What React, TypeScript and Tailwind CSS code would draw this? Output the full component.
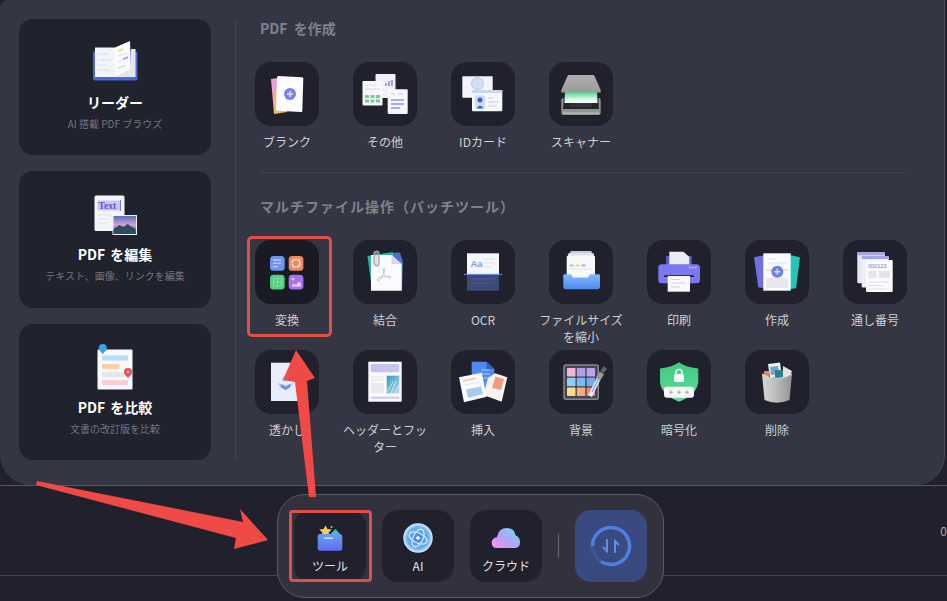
import type { ReactNode } from "react";

const Svg = ({ size = 64, h, children }: { size?: number; h?: number; children: ReactNode }) => (
  <svg width={size} height={h ?? size} viewBox={`0 0 ${size} ${h ?? size}`} fill="none">
    {children}
  </svg>
);

// left column cards
const ReaderIcon = () => (
  <Svg size={60} h={48}>
    <rect x="8" y="14" width="44.500" height="29.500" rx="2.500" fill="#4f68d8" />
    <path d="M10 10.500 H30 V40 H10 Z" fill="#f1f4f8" />
    <path d="M30 39.500 L46 33 V12 H50.500 V40 H30 Z" fill="#e4e6ec" />
    <path d="M30 10.500 L45 4 L46 33 L30 40 Z" fill="#fbfbfd" />
    <path d="M12.500 17h11M12.500 23h14M12.500 28h9M12.500 33h13" stroke="#d3e0e6" strokeWidth="1" />
    <path d="M33 14l5-2" stroke="#ecdf8a" strokeWidth="2" />
    <path d="M33 19l9-3M33 25l10-4" stroke="#dcdeee" strokeWidth="1.200" />
    <path d="M38 22l5-2" stroke="#9ea3e0" strokeWidth="1.500" />
    <path d="M33 31l7-2.500" stroke="#b0dcd2" strokeWidth="1.200" />
  </Svg>
);

const EditIcon = () => (
  <Svg size={60} h={48}>
    <defs>
      <linearGradient id="sky" x1="0" y1="0" x2="0" y2="1">
        <stop offset="0" stopColor="#5c6fb8" />
        <stop offset="0.500" stopColor="#d8a0d8" />
        <stop offset="1" stopColor="#2e5a70" />
      </linearGradient>
    </defs>
    <rect x="9.500" y="6.500" width="30" height="35.500" rx="1.500" fill="#f3f5fa" />
    <rect x="12.500" y="11.500" width="22.500" height="10" fill="#cbc6f6" />
    <rect x="35" y="11" width="0.800" height="11" fill="#5b54d6" />
    <text x="13.500" y="20" fontFamily="'Liberation Serif', serif" fontSize="9.500" fontWeight="700" fill="#5b54d6">
      Text
    </text>
    <path d="M13 26h14M13 30h12M13 34h10" stroke="#dfe2ea" strokeWidth="1.200" />
    <rect x="27.500" y="26" width="24.500" height="20" fill="#eef2f7" />
    <rect x="28.500" y="27" width="22.500" height="18" fill="url(#sky)" />
    <path d="M28.500 40l6-4 4 2 4-3 8 5v5h-22z" fill="#2c4c5e" />
  </Svg>
);

const CompareIcon = () => (
  <Svg size={60} h={48}>
    <rect x="12.500" y="7.500" width="35" height="40" rx="1" fill="#f8f9fb" />
    <rect x="17" y="13.500" width="26" height="5" fill="#b5dcf8" />
    <rect x="17" y="22" width="17.500" height="5" rx="1" fill="#f8cfa8" />
    <rect x="17" y="30" width="22" height="5" fill="#e6e7ec" />
    <rect x="17" y="38" width="26" height="5" fill="#fad0d4" />
    <path d="M17.800 12 C15 9 13.800 8 13.800 6 a4 4 0 0 1 8 0 C21.800 8 20.500 9 17.800 12z" fill="#3aa0ea" />
    <path d="M43 36 C40 33 39 32 39 30 a4 4 0 0 1 8 0 C47 32 46 33 43 36z" fill="#e5505a" />
    <circle cx="43" cy="30" r="1.200" fill="#f6c3c7" />
  </Svg>
);

// tile icons
const PlusDisc = ({ cx, cy, r, fill }: { cx: number; cy: number; r: number; fill: string }) => (
  <>
    <circle cx={cx} cy={cy} r={r} fill={fill} />
    <path d={`M${cx - r / 2} ${cy}h${r}M${cx} ${cy - r / 2}v${r}`} stroke="#e6e8ff" strokeWidth="1.400" />
  </>
);

const BlankIcon = () => (
  <Svg>
    <defs>
      <linearGradient id="blank" x1="0" y1="0" x2="0" y2="1">
        <stop offset="0" stopColor="#e59af0" />
        <stop offset="1" stopColor="#f7bf56" />
      </linearGradient>
    </defs>
    <path d="M16 17 L30 15 L32 50 L19 52 Z" fill="url(#blank)" />
    <path d="M23.500 14 L47 15.300 Q48.400 15.400 48.300 17 L47.300 49 Q47.300 50.200 46 50 L22.500 48.800 Q21 48.700 21 47 L22 15.500 Q22 14 23.500 14 Z" fill="#fdfdff" />
    <PlusDisc cx={35} cy={32} r={6} fill="#7b7ff0" />
  </Svg>
);

const OtherIcon = () => (
  <Svg>
    <rect x="22.500" y="12" width="20" height="24" rx="1" fill="#f0f1f6" />
    <path d="M33 24v-3M36 24v-5M39 24v-6" stroke="#a79ae8" strokeWidth="2" />
    <rect x="9.500" y="19" width="20" height="24.500" rx="1" fill="#f7f8fa" />
    <path d="M12 23h12M12 27h15" stroke="#d8dae2" />
    <path d="M12 33h4v3h-4zM17.500 33h4v3h-4zM23 33h4v3h-4zM12 37.500h4v3h-4zM17.500 37.500h4v3h-4zM23 37.500h4v3h-4z" fill="#6fd08f" />
    <rect x="34.700" y="27.300" width="20" height="24.700" rx="1" fill="#f6f7fb" />
    <path d="M38 32h4M45 32h5" stroke="#c9cbd6" />
    <path d="M38 38h13M38 42h13M38 46h9" stroke="#a5aee6" strokeWidth="1.800" />
  </Svg>
);

const IdIcon = () => (
  <Svg>
    <rect x="11.300" y="14.300" width="30.400" height="21.400" rx="1" fill="#f2f4fa" />
    <circle cx="26.500" cy="21.500" r="6" fill="#cfe0f4" stroke="#b6c6e4" />
    <rect x="21" y="28" width="30.300" height="21.300" rx="1" fill="#f5f7fc" />
    <rect x="21" y="28" width="30.300" height="3" fill="#c4d6f2" />
    <rect x="24" y="33.500" width="10" height="13" fill="#cfdcf6" />
    <circle cx="29" cy="38" r="2.500" fill="#3f62c8" />
    <path d="M25.500 46.500 q3.500-6 7 0z" fill="#3f62c8" />
    <path d="M37 36h5M37 40h11M37 44h9" stroke="#c8ccd8" />
  </Svg>
);

const ScannerIcon = () => (
  <Svg>
    <defs>
      <linearGradient id="lid" x1="0" y1="0" x2="0" y2="1">
        <stop offset="0" stopColor="#aeaeae" />
        <stop offset="1" stopColor="#9a9a9a" />
      </linearGradient>
      <linearGradient id="glow" x1="0" y1="0" x2="0" y2="1">
        <stop offset="0" stopColor="#45d48c" />
        <stop offset="0.700" stopColor="#e4fbef" />
        <stop offset="1" stopColor="#f4fdf8" />
      </linearGradient>
    </defs>
    <rect x="12.300" y="36" width="39.400" height="17" rx="2" fill="#929393" />
    <path d="M15 30 H49 L50 47 H14 Z" fill="#23272b" />
    <path d="M16 30 H48 L48.500 41 H15.500 Z" fill="url(#glow)" />
    <rect x="21" y="41" width="22" height="4" fill="#30343a" />
    <path d="M19.500 13 H44 Q45 13 45.500 14 L51.700 28 V30.500 H12.300 V28 L18.500 14 Q19 13 19.500 13 Z" fill="url(#lid)" />
    <rect x="14" y="50.500" width="36" height="1.300" fill="#bcbdbd" />
  </Svg>
);

const ConvertIcon = () => (
  <Svg>
    <rect x="15" y="16" width="14.700" height="14.700" rx="3.500" fill="#7193f0" />
    <path d="M18 20h8M18 23.300h8M18 26.600h5" stroke="#bccdfa" strokeWidth="1.300" />
    <rect x="33.700" y="16" width="14.700" height="14.700" rx="3.500" fill="#ee8a62" />
    <circle cx="41" cy="23.300" r="4" stroke="#f9d4c4" strokeWidth="1.800" strokeDasharray="5.500 0.800" />
    <rect x="15" y="34.700" width="14.700" height="14.700" rx="3.500" fill="#54cd7e" />
    <path d="M18.500 38.500h8v7.500h-8zM22.500 38.500v7.500M18.500 42.200h8" stroke="#86dfa6" strokeWidth="1" />
    <rect x="33.700" y="34.700" width="14.700" height="14.700" rx="3.500" fill="#a870f0" />
    <circle cx="38" cy="39" r="1.300" fill="#e4d2fb" />
    <path d="M36 46.500l3-3 2 1.500 3-3.500 2 2v3z" fill="#e4d2fb" />
  </Svg>
);

const MergeIcon = () => (
  <Svg>
    <path d="M38 13 L47 12.500 L50 22 L49 50 H30 Z" fill="#4f6fd0" />
    <path d="M14.500 16 L40 12 L45 48 L19 50 Z" fill="#27b8a6" />
    <path d="M18 15 H38.500 L48.700 24 V50.700 H18 Z" fill="#fbfbfd" />
    <path d="M38.500 15 L48.700 24 H38.500 Z" fill="#d8dae2" />
    <path d="M31 28 q1.500 3-1 7 l-3 5 q-2 2-3 0 q0-2 4-3 l9-1 q2 1 0 2 q-3 0-6-4 q-1.500-3 0-6z" stroke="#c6c8cf" strokeWidth="1" />
    <path d="M22 12 q3-2 4 1 v11 q-1 3-4 1 q-1-1-1-2 v-10 q0-1 1-1z" stroke="#a2a4ac" strokeWidth="1.300" fill="#c9cad0" fillOpacity="0.500" />
  </Svg>
);

const OcrIcon = () => (
  <Svg>
    <rect x="16" y="13.300" width="32" height="21" fill="#f5f7fb" />
    <text x="19.500" y="27" fontFamily="'Liberation Sans', sans-serif" fontSize="9.500" fontWeight="700" fill="#7ea0ea">
      Aa
    </text>
    <path d="M33 19h11M33 23h11M33 27h8" stroke="#dcdfe6" />
    <rect x="13" y="33.800" width="38" height="1" fill="#6f9af0" />
    <rect x="16" y="35" width="32" height="15.700" fill="#3b4a78" />
    <path d="M20 39h24M20 43h24" stroke="#4d5d90" />
  </Svg>
);

const CompressIcon = () => (
  <Svg>
    <defs>
      <linearGradient id="tray" x1="0" y1="0" x2="0" y2="1">
        <stop offset="0" stopColor="#86baf8" />
        <stop offset="1" stopColor="#4a8af0" />
      </linearGradient>
    </defs>
    <rect x="21" y="11" width="22" height="12" rx="1.500" fill="#c9ccd4" />
    <rect x="19" y="13" width="26" height="12" rx="1.500" fill="#dfe1e7" />
    <rect x="17.700" y="15.500" width="28.300" height="23" rx="1.500" fill="#f7f8fa" />
    <rect x="20.500" y="24.500" width="4" height="1.800" fill="#7fd6a0" />
    <rect x="26.500" y="24.500" width="4" height="1.800" fill="#efcf70" />
    <rect x="32.500" y="24.500" width="4" height="1.800" fill="#8ab0ee" />
    <path d="M20.500 29h23" stroke="#dfe1e7" />
    <path d="M14.300 35.500 Q14.300 34.300 15.500 34.300 H22 L24 37.500 H39 L41 34.300 H49.800 Q51 34.300 51 35.500 V46.500 Q51 49.300 48.200 49.300 H17 Q14.300 49.300 14.300 46.500 Z" fill="url(#tray)" />
  </Svg>
);

const PrintIcon = () => (
  <Svg>
    <rect x="19" y="16" width="25.700" height="12" fill="#5a56c8" />
    <path d="M22.300 11.700 H36.500 L42.300 17 V27 H22.300 Z" fill="#eceef2" />
    <rect x="11.300" y="24.300" width="41.700" height="19" rx="3.500" fill="#7b78f0" />
    <path d="M45 27.500h1.500M48 27.500h1.500M42 27.500h1.500" stroke="#dfe0fb" strokeWidth="1.300" />
    <rect x="17" y="35.300" width="30" height="1.800" rx="0.900" fill="#1c1c40" />
    <rect x="20.700" y="36" width="22.300" height="15.700" fill="#f9f9fb" />
    <path d="M24 39.500h9M24 43h14M24 47h9" stroke="#cfd0dc" />
  </Svg>
);

const CreateIcon = () => (
  <Svg>
    <path d="M9 17.300 L20 15 V48.300 L13.300 47.300 Z" fill="#6f70e4" />
    <path d="M45 15 L55 17.300 L51 48.300 L45 49 Z" fill="#1fc8b8" />
    <rect x="18.300" y="13.300" width="27.400" height="37.400" fill="#fbfcfe" />
    <path d="M22 19h10M22 23h20" stroke="#dfe1e8" />
    <path d="M21 30h6M38 30h5" stroke="#efdc90" strokeWidth="1.300" />
    <rect x="21" y="38" width="22" height="10" fill="#e6e8ee" />
    <PlusDisc cx={32.300} cy={31.700} r={6} fill="#6f7df0" />
  </Svg>
);

const NumberIcon = () => (
  <Svg>
    <rect x="14.300" y="12.300" width="27.700" height="31" rx="1" fill="#e7e8f4" />
    <rect x="14.300" y="12.300" width="27.700" height="3" fill="#a7a3ea" />
    <rect x="18.700" y="16" width="27" height="31.500" rx="1" fill="#eeeff8" />
    <rect x="18.700" y="16" width="27" height="3" fill="#a7a3ea" />
    <rect x="23" y="20" width="26.700" height="32" rx="1" fill="#fafbfc" />
    <text x="25" y="27.500" fontFamily="'Liberation Sans', sans-serif" fontSize="5.500" fill="#7a76e0">
      000123
    </text>
    <rect x="25.500" y="31" width="8" height="7" fill="#e3e4e8" />
    <rect x="36" y="31" width="11" height="7" fill="#e3e4e8" />
    <path d="M26 42h20M26 45.500h14M26 49h18" stroke="#dfe0e6" />
  </Svg>
);

const WatermarkIcon = () => (
  <Svg>
    <rect x="16" y="12.700" width="34" height="38.300" fill="#e9edfb" />
    <path d="M23 33 q8 4 15 0 q-1.500 5-7.500 7 q-6-2-7.500-7z" fill="#a5c0f5" />
    <path d="M26 34l4.500 3 4.500-3v3l-4.500 3-4.500-3z" fill="#5f8eee" />
    <circle cx="30" cy="29" r="3" fill="#b9cdf6" />
  </Svg>
);

const HeaderFooterIcon = () => (
  <Svg>
    <defs>
      <linearGradient id="sea" x1="0" y1="0" x2="1" y2="1">
        <stop offset="0" stopColor="#2f9fc0" />
        <stop offset="1" stopColor="#b8d8ea" />
      </linearGradient>
    </defs>
    <rect x="15.300" y="11.700" width="33.400" height="40" fill="#fafafd" />
    <rect x="17.700" y="14" width="28.600" height="8.300" rx="1.500" fill="#c5c3f2" />
    <path d="M18 27h13M18 30h13" stroke="#e1e2e8" />
    <rect x="18" y="33" width="13" height="10" fill="#e9eaee" />
    <rect x="33.700" y="25.700" width="12.600" height="17.600" fill="url(#sea)" />
    <path d="M34 42l6-10M38 43l5-12M42 43l4-8" stroke="#e4f1f7" strokeWidth="0.800" />
    <rect x="17.700" y="46.700" width="28.600" height="2" fill="#c9c7ef" />
  </Svg>
);

const InsertIcon = () => (
  <Svg>
    <path d="M20.700 11.700 H35.500 L43.300 19 V38.300 H20.700 Z" fill="#4f8af2" />
    <path d="M35.500 11.700 L43.300 19 H35.500 Z" fill="#2f62c8" />
    <path d="M30 20h9M30 24h9M30 28h9" stroke="#a9c8f8" />
    <path d="M44 23.300 L56.300 27.300 L50.700 51.700 L32.300 45 L37 28 Z" fill="#f5f3f2" />
    <path d="M44.500 26.500 L53 29 L50 40 L41 38 Z" fill="#f09a80" />
    <path d="M8 27.300 L30.700 22.700 L35.700 46.700 L13 52.300 Z" fill="#fbfbfd" />
    <path d="M12 31l13-2.700" stroke="#f3c890" strokeWidth="1.500" />
    <path d="M13 35l15-3" stroke="#e6e7ee" />
    <path d="M15 39.500 L30 36.500 L32 44 L17 48 Z" fill="#a5cdf0" />
  </Svg>
);

const BackgroundIcon = () => (
  <Svg>
    <rect x="15" y="15" width="34.300" height="34.300" rx="2" fill="#44454e" stroke="#87878d" strokeWidth="1.500" />
    <rect x="18" y="18" width="8.500" height="8.500" rx="0.800" fill="#f4b4d6" />
    <rect x="27.800" y="18" width="8.500" height="8.500" rx="0.800" fill="#b49cf0" />
    <rect x="37.600" y="18" width="8.500" height="8.500" rx="0.800" fill="#b8a4f0" />
    <rect x="18" y="27.800" width="8.500" height="8.500" rx="0.800" fill="#88d0f8" />
    <rect x="27.800" y="27.800" width="8.500" height="8.500" rx="0.800" fill="#74bcf4" />
    <rect x="37.600" y="27.800" width="8.500" height="8.500" rx="0.800" fill="#7ca8f0" />
    <rect x="18" y="37.600" width="8.500" height="8.500" rx="0.800" fill="#f8dc88" />
    <rect x="27.800" y="37.600" width="8.500" height="8.500" rx="0.800" fill="#f4ac80" />
    <rect x="37.600" y="37.600" width="8.500" height="8.500" rx="0.800" fill="#e88870" />
    <path d="M41 46 L50 28" stroke="#dfeafc" strokeWidth="4" />
    <path d="M43 42 L50 28" stroke="#78a8f0" strokeWidth="1.200" />
    <path d="M49 29 L53 23" stroke="#9a9a9e" strokeWidth="5" />
    <path d="M53 22 L56.500 17.500" stroke="#66666c" strokeWidth="4" />
  </Svg>
);

const EncryptIcon = () => (
  <Svg>
    <defs>
      <linearGradient id="shield" x1="0" y1="0" x2="0" y2="1">
        <stop offset="0" stopColor="#3ecb80" />
        <stop offset="1" stopColor="#62d898" />
      </linearGradient>
    </defs>
    <path d="M32 12.300 Q38 17 51.300 18.500 V31 Q51 44 32 51.700 Q13 44 13 31 V18.500 Q26 17 32 12.300 Z" fill="url(#shield)" />
    <rect x="27" y="24" width="10" height="8" rx="1.500" fill="#f4fbf7" />
    <path d="M29 24.500 v-2 a3 3 0 0 1 6 0 v2" stroke="#f4fbf7" strokeWidth="1.500" />
    <rect x="17" y="36.700" width="30" height="11" rx="3" fill="#f7f9f8" />
    <path d="M22 42.200h4M24 40.200v4M30 42.200h4M32 40.200v4M38 42.200h4M40 40.200v4" stroke="#a5a8a8" strokeWidth="1" />
  </Svg>
);

const DeleteIcon = () => (
  <Svg>
    <defs>
      <linearGradient id="can" x1="0" y1="0" x2="1" y2="0">
        <stop offset="0" stopColor="#d8d8d8" />
        <stop offset="0.450" stopColor="#bcbcbc" />
        <stop offset="1" stopColor="#929292" />
      </linearGradient>
    </defs>
    <path d="M23 14 L35 12.500 L37 27 L25 28 Z" fill="#eceef0" />
    <path d="M25 17 L33 16 L34 24 L26 25 Z" fill="#6aa8c8" />
    <path d="M30 20 H44 V29 H30 Z" fill="#2f7f8f" />
    <path d="M19 21 H24 V28 H19 Z" fill="#e08858" />
    <path d="M38 16 L47 21 L44 29 L38 27 Z" fill="#e4e4e6" />
    <path d="M17 24 Q32 33 47 24 L44.500 50 Q32 55.500 19.500 50 Z" fill="url(#can)" />
    <path d="M17 24 Q32 33 47 24" stroke="#dcdcdc" strokeWidth="1" />
  </Svg>
);

// dock icons
const ToolIcon = () => (
  <Svg size={36}>
    <defs>
      <linearGradient id="folder" x1="0" y1="0" x2="0" y2="1">
        <stop offset="0" stopColor="#6a9cf5" />
        <stop offset="1" stopColor="#5e6ff2" />
      </linearGradient>
    </defs>
    <path d="M13.500 4.500 l1.900 3.400 4.300.7 -3 2.900 .5 2.500 h-7.400 l.5-2.500 -3-2.900 4.300-.7z" fill="#f6cf4e" />
    <path d="M23.500 8 l4.500 5 h-9.500z" fill="#34c6c0" />
    <circle cx="19.500" cy="6" r="1" fill="#7fdad0" />
    <rect x="5.700" y="13" width="24.600" height="16.700" rx="2.500" fill="url(#folder)" />
    <rect x="12" y="16.500" width="9" height="1.500" rx="0.700" fill="#d8e4fd" />
  </Svg>
);

const AiIcon = () => (
  <Svg size={36}>
    <defs>
      <radialGradient id="orb" cx="0.500" cy="0.500" r="0.500">
        <stop offset="0" stopColor="#3f86ea" />
        <stop offset="0.720" stopColor="#66b0f6" />
        <stop offset="1" stopColor="#e0ecfd" />
      </radialGradient>
    </defs>
    <circle cx="18" cy="17" r="14.700" fill="url(#orb)" />
    <ellipse cx="18" cy="17" rx="9.500" ry="5" stroke="#e2eefe" strokeWidth="1.200" transform="rotate(25 18 17)" />
    <ellipse cx="18" cy="17" rx="9.500" ry="5" stroke="#e2eefe" strokeWidth="1.200" transform="rotate(-65 18 17)" />
    <path d="M16 17h4M18 15v4" stroke="#fff" strokeWidth="1.300" />
  </Svg>
);

const CloudIcon = () => (
  <Svg size={36}>
    <defs>
      <linearGradient id="cloud" x1="0.100" y1="0.900" x2="0.900" y2="0.300">
        <stop offset="0" stopColor="#ee96ec" />
        <stop offset="0.500" stopColor="#b8a0f8" />
        <stop offset="1" stopColor="#80ccf8" />
      </linearGradient>
    </defs>
    <path d="M9 27 Q3.700 27 3.700 21.800 Q3.700 17 9 16.300 Q10.500 7 19 7 Q26.300 7 27.700 14.500 Q32 16 32 21 Q32 27 26.500 27 Z" fill="url(#cloud)" />
  </Svg>
);

const SwapRing = () => (
  <Svg size={44}>
    <circle cx="22" cy="22" r="18.500" stroke="#41558f" strokeWidth="3.500" />
    <path d="M3.500 22 A18.500 18.500 0 1 1 12 37.600" stroke="#4d7fe4" strokeWidth="3.500" />
    <path d="M18 15 V27 L14 23" stroke="#5f8eea" strokeWidth="2" />
    <path d="M26 29 V17 L30 21" stroke="#5f8eea" strokeWidth="2" />
  </Svg>
);

type TileData = { label: string; icon: ReactNode; mark?: boolean };

const createTiles: TileData[] = [
  { label: "ブランク", icon: <BlankIcon /> },
  { label: "その他", icon: <OtherIcon /> },
  { label: "IDカード", icon: <IdIcon /> },
  { label: "スキャナー", icon: <ScannerIcon /> },
];

const batchTiles: TileData[] = [
  { label: "変換", icon: <ConvertIcon />, mark: true },
  { label: "結合", icon: <MergeIcon /> },
  { label: "OCR", icon: <OcrIcon /> },
  { label: "ファイルサイズを縮小", icon: <CompressIcon /> },
  { label: "印刷", icon: <PrintIcon /> },
  { label: "作成", icon: <CreateIcon /> },
  { label: "通し番号", icon: <NumberIcon /> },
  { label: "透かし", icon: <WatermarkIcon /> },
  { label: "ヘッダーとフッター", icon: <HeaderFooterIcon /> },
  { label: "挿入", icon: <InsertIcon /> },
  { label: "背景", icon: <BackgroundIcon /> },
  { label: "暗号化", icon: <EncryptIcon /> },
  { label: "削除", icon: <DeleteIcon /> },
];

const cards = [
  { title: "リーダー", sub: "AI 搭載 PDF ブラウズ", icon: <ReaderIcon /> },
  { title: "PDF を編集", sub: "テキスト、画像、リンクを編集", icon: <EditIcon /> },
  { title: "PDF を比較", sub: "文書の改訂版を比較", icon: <CompareIcon /> },
];

function Tile({ label, icon, mark }: TileData) {
  return (
    <div className="relative flex h-[110px] w-[98px] flex-col items-center">
      <div className={`flex h-16 w-16 items-center justify-center rounded-2xl ${mark ? "bg-[#191a23]" : "bg-[#20212c]"}`}>
        {icon}
      </div>
      <span className="mt-[7px] w-[88px] text-center text-xs leading-[17px] text-[#cfd0d5]">{label}</span>
      {mark && <div className="absolute left-[9px] top-[-4px] h-[101px] w-[85px] rounded-[5px] border-[3px] border-[#e0504a]" />}
    </div>
  );
}

function DockButton({ label, icon, mark }: TileData) {
  return (
    <div className="relative flex h-[72px] w-[72px] flex-col items-center rounded-2xl bg-[#20212c] pt-[11px]">
      {icon}
      <span className="mt-px text-xs leading-4 text-[#e2e3e6]">{label}</span>
      {mark && <div className="absolute left-[-5px] top-0 h-[72px] w-[83px] rounded-[4px] border-[3px] border-[#e0504a]" />}
    </div>
  );
}

export default function App() {
  return (
    <div className="relative h-[601px] w-[947px] overflow-hidden bg-[#20212c] font-['Noto_Sans_CJK_JP','Noto_Sans',sans-serif]">
      <div className="border-b border-[#55565f]">
        <div className="flex h-[485px] w-[945px] rounded-tl-lg rounded-b-[30px] border-r border-[#4b4c58] bg-[#353643] pl-[19px] pt-[19px]">
          <div className="flex h-[441px] w-[192px] flex-col gap-4">
            {cards.map((card) => (
              <div key={card.title} className="flex flex-1 flex-col items-center rounded-[14px] bg-[#20222d] pt-[18px]">
                {card.icon}
                <div className="mt-[7px] text-sm leading-5 font-bold text-white [word-spacing:2px]">{card.title}</div>
                <div className="mt-[5px] text-[10px] leading-[14px] text-[#74757f]">{card.sub}</div>
              </div>
            ))}
          </div>
          <div className="ml-6 h-[441px] w-px bg-[#44454f]" />
          <div className="w-[690px]">
            <h2 className="-mt-px pl-6 text-sm leading-5 font-bold text-[#80818c] [word-spacing:3px]">PDF を作成</h2>
            <div className="mt-6 flex pl-0.5">
              {createTiles.map((tile) => (
                <Tile key={tile.label} {...tile} />
              ))}
            </div>
            <div className="ml-6 h-px w-[645px] bg-[#44454f]" />
            <h2 className="mt-[23px] pl-6 text-sm leading-5 font-bold tracking-[1px] text-[#80818c]">マルチファイル操作（バッチツール）</h2>
            <div className="mt-6 grid grid-cols-[repeat(7,98px)] pl-0.5">
              {batchTiles.map((tile) => (
                <Tile key={tile.label} {...tile} />
              ))}
            </div>
          </div>
        </div>
      </div>

      <div className="flex h-[90px] items-center justify-end border-b border-[#44454f]">
        <span className="text-xs text-[#a9aab2]">0</span>
      </div>

      <div className="absolute left-[277px] top-[494px] flex h-[104px] w-[387px] items-center gap-4 rounded-[28px] border border-[#5a5b66] bg-[#31323e] pl-4">
        <DockButton label="ツール" icon={<ToolIcon />} mark />
        <DockButton label="AI" icon={<AiIcon />} />
        <DockButton label="クラウド" icon={<CloudIcon />} />
        <div className="h-6 w-px bg-[#6a6b75]" />
        <div className="flex h-[72px] w-[72px] items-center justify-center rounded-2xl bg-[#3a4a80]">
          <SwapRing />
        </div>
      </div>

      <svg className="pointer-events-none absolute inset-0" width="947" height="601" fill="#ef4a45">
        <polygon points="296,350 315,378 307,381 316,497 309,497 295,382 283,380" />
        <polygon points="37,481 243,522 240,509 268,540 234,549 236,538 36,485" />
      </svg>
    </div>
  );
}
